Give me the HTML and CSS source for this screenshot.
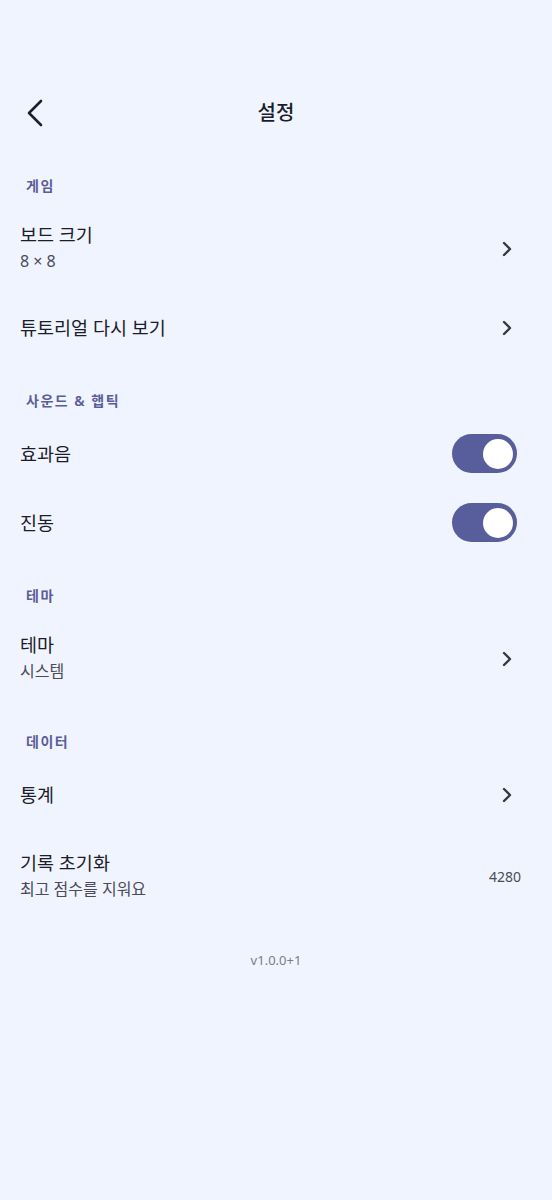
FILE: index.html
```html
<!DOCTYPE html>
<html lang="ko">
<head>
<meta charset="utf-8">
<title>설정</title>
<link rel="stylesheet" href="styles.css">
</head>
<body>
<div class="page">
  <header class="appbar">
    <button class="back" aria-label="뒤로">
      <svg width="24" height="28" viewBox="0 0 24 28"><polyline points="17,2 5,14 17,26" fill="none" stroke="#1c1f33" stroke-width="2.6" stroke-linecap="round" stroke-linejoin="round"/></svg>
    </button>
    <h1 class="title">설정</h1>
  </header>

  <div class="section">게임</div>
  <div class="row two">
    <div class="texts"><div class="t">보드 크기</div><div class="s">8 × 8</div></div>
    <svg class="chev" width="12" height="16" viewBox="0 0 12 16"><polyline points="3,2 9,8 3,14" fill="none" stroke="#353745" stroke-width="2.4" stroke-linecap="round" stroke-linejoin="round"/></svg>
  </div>
  <div class="row">
    <div class="texts"><div class="t">튜토리얼 다시 보기</div></div>
    <svg class="chev" width="12" height="16" viewBox="0 0 12 16"><polyline points="3,2 9,8 3,14" fill="none" stroke="#353745" stroke-width="2.4" stroke-linecap="round" stroke-linejoin="round"/></svg>
  </div>

  <div class="section">사운드 &amp; 햅틱</div>
  <div class="row">
    <div class="texts"><div class="t">효과음</div></div>
    <div class="switch"><div class="thumb"></div></div>
  </div>
  <div class="row">
    <div class="texts"><div class="t">진동</div></div>
    <div class="switch"><div class="thumb"></div></div>
  </div>

  <div class="section">테마</div>
  <div class="row two">
    <div class="texts"><div class="t">테마</div><div class="s">시스템</div></div>
    <svg class="chev" width="12" height="16" viewBox="0 0 12 16"><polyline points="3,2 9,8 3,14" fill="none" stroke="#353745" stroke-width="2.4" stroke-linecap="round" stroke-linejoin="round"/></svg>
  </div>

  <div class="section">데이터</div>
  <div class="row">
    <div class="texts"><div class="t">통계</div></div>
    <svg class="chev" width="12" height="16" viewBox="0 0 12 16"><polyline points="3,2 9,8 3,14" fill="none" stroke="#353745" stroke-width="2.4" stroke-linecap="round" stroke-linejoin="round"/></svg>
  </div>
  <div class="row two last">
    <div class="texts"><div class="t">기록 초기화</div><div class="s">최고 점수를 지워요</div></div>
    <div class="num">4280</div>
  </div>

  <div class="version">v1.0.0+1</div>
</div>
</body>
</html>
```

FILE: styles.css
```css
html, body {
  margin: 0;
  padding: 0;
  background: #f0f4fe;
}
body {
  font-family: "Noto Sans", "Noto Sans CJK KR", sans-serif;
  color: #1c1d2a;
  min-height: 1200px;
}
.page {
  display: flex;
  flex-direction: column;
  padding-top: 79px;
}
.appbar {
  height: 68px;
  display: flex;
  align-items: center;
  justify-content: center;
  position: relative;
}
.back {
  position: absolute;
  left: 24px;
  top: 20px;
  background: none;
  border: 0;
  padding: 0;
  width: 24px;
  height: 28px;
  display: flex;
}
.title {
  margin: 0;
  font-size: 20px;
  font-weight: 500;
  line-height: 28px;
  color: #1b1d2b;
}
.section {
  padding: 29px 26px 8px;
  line-height: 20px;
  font-size: 14px;
  font-weight: 600;
  color: #5a5e98;
  letter-spacing: 1.5px;
}
.row {
  height: 69px;
  display: flex;
  align-items: center;
  padding: 0 35px 0 20px;
}
.row.two {
  height: 89px;
}
.row.two.last {
  height: 94px;
}
.texts {
  flex: 1;
  display: flex;
  flex-direction: column;
}
.t {
  font-size: 18.5px;
  line-height: 26px;
  color: #1c1d2a;
}
.s {
  font-size: 16px;
  line-height: 27px;
  color: #4a4b57;
}
.chev {
  margin-right: 4px;
}
.switch {
  width: 65px;
  height: 39px;
  border-radius: 20px;
  background: #585e9c;
  display: flex;
  align-items: center;
  justify-content: flex-end;
  padding-right: 4px;
  box-sizing: border-box;
}
.thumb {
  width: 30px;
  height: 30px;
  border-radius: 50%;
  background: #ffffff;
}
.num {
  font-size: 14px;
  color: #4a4c58;
  margin-right: -4px;
}
.version {
  text-align: center;
  font-size: 13px;
  color: #7a7c88;
  margin-top: 27px;
  line-height: 20px;
}
```
